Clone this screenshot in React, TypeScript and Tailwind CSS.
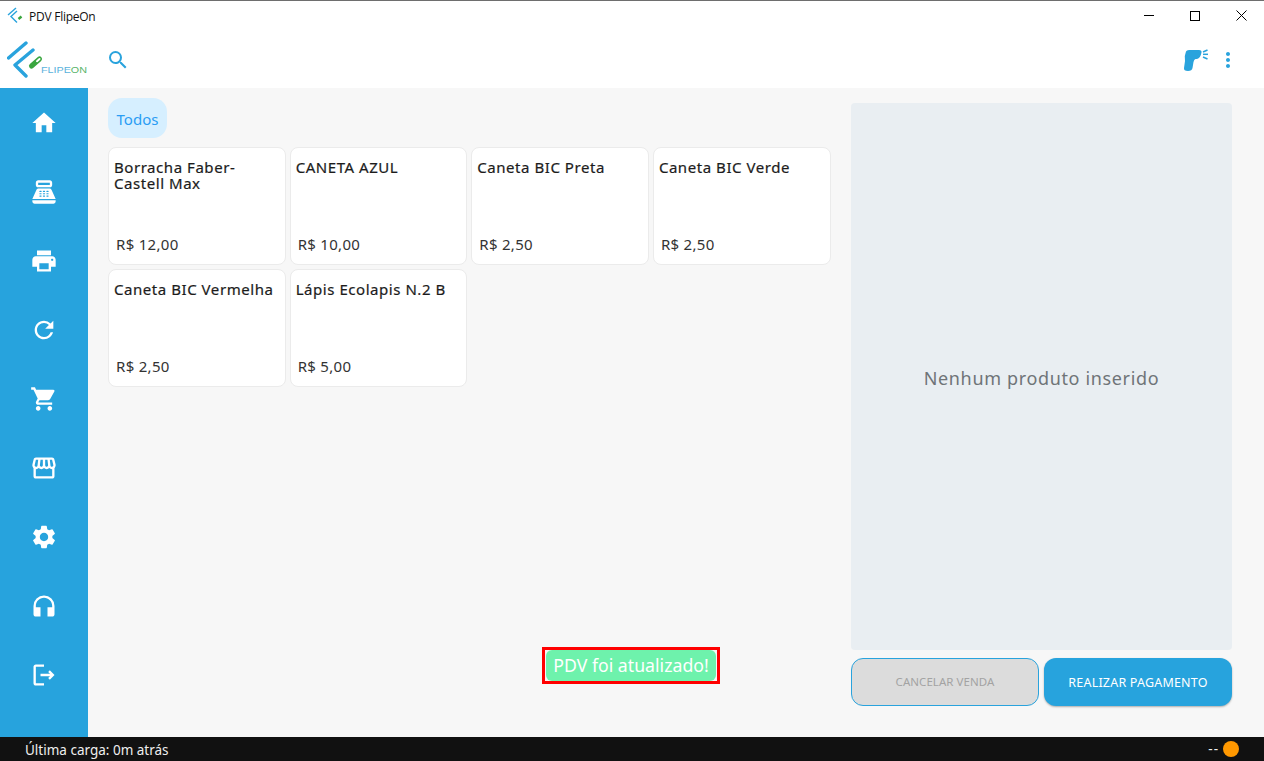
import React from "react";
import {
  MdHome,
  MdPointOfSale,
  MdPrint,
  MdRefresh,
  MdShoppingCart,
  MdOutlineStorefront,
  MdSettings,
  MdHeadphones,
  MdOutlineLogout,
  MdSearch,
  MdMoreVert,
} from "react-icons/md";

const navIcons = [
  MdHome,
  MdPointOfSale,
  MdPrint,
  MdRefresh,
  MdShoppingCart,
  MdOutlineStorefront,
  MdSettings,
  MdHeadphones,
  MdOutlineLogout,
];

const products = [
  { name: "Borracha Faber-Castell Max", price: "R$ 12,00" },
  { name: "CANETA AZUL", price: "R$ 10,00" },
  { name: "Caneta BIC Preta", price: "R$ 2,50" },
  { name: "Caneta BIC Verde", price: "R$ 2,50" },
  { name: "Caneta BIC Vermelha", price: "R$ 2,50" },
  { name: "Lápis Ecolapis N.2 B", price: "R$ 5,00" },
];

const SmallLogo = () => (
  <svg width="16" height="18" viewBox="0 0 16 18" fill="none">
    <path d="M1 8 L9 1" stroke="#29a3dd" strokeWidth="1.4" />
    <path d="M10 4 L4 9.5 L10 15.5" stroke="#29a3dd" strokeWidth="1.4" />
    <path d="M11.5 12 L14.5 9.5" stroke="#3aa63f" strokeWidth="2.4" />
  </svg>
);

const Logo = () => (
  <svg width="82" height="38" viewBox="0 0 82 38" fill="none">
    <path d="M1.5 18 L19 3" stroke="#29a3dd" strokeWidth="3.4" strokeLinecap="round" />
    <path
      d="M26 10 L8 25 L19 36"
      stroke="#29a3dd"
      strokeWidth="3.4"
      strokeLinecap="round"
      strokeLinejoin="round"
    />
    <path d="M24.5 26 L32.5 19" stroke="#3aa63f" strokeWidth="5" strokeLinecap="round" />
    <path d="M30 21.2 L32.5 19" stroke="#ffffff" strokeWidth="2" strokeLinecap="round" />
    <text
      x="34"
      y="32.5"
      fontFamily="'Liberation Sans', sans-serif"
      fontSize="8.5"
      textLength="46"
      lengthAdjust="spacingAndGlyphs"
    >
      <tspan fill="#5ab2dc">FLIPE</tspan>
      <tspan fill="#58b46a">ON</tspan>
    </text>
  </svg>
);

const ScannerIcon = () => (
  <svg width="25" height="23" viewBox="0 0 25 23" fill="none">
    <path
      d="M3 2.5 Q3.5 1 6 1 H16 Q19 1 18.5 3.5 Q17.5 9 14 10 H12.5 Q11 10.5 10.5 13 L9.5 19 Q9 22 5 22 Q0.5 22 1 19 L2 12 Q1 7 3 2.5 Z"
      fill="#29a3dd"
    />
    <path d="M20 5.3 H25" stroke="#29a3dd" strokeWidth="1.5" />
    <path d="M20 3 L24.5 1" stroke="#29a3dd" strokeWidth="1.5" />
    <path d="M20 8 L24.5 10" stroke="#29a3dd" strokeWidth="1.5" />
  </svg>
);

export default function App() {
  return (
    <div className="relative flex h-[761px] w-[1264px] flex-col overflow-hidden bg-[#f7f7f7] font-['Noto_Sans',sans-serif]">
      <div className="flex h-[30px] shrink-0 items-center border-t border-[#6e6e6e] bg-white pl-[7px]">
        <SmallLogo />
        <span className="ml-[6px] pt-[2px] font-['Open_Sans',sans-serif] text-xs tracking-[-0.25px] text-[#111]">
          PDV FlipeOn
        </span>
        <div className="ml-auto flex items-center">
          <div className="flex w-[46px] justify-center">
            <div className="h-px w-[10px] bg-black" />
          </div>
          <div className="flex w-[46px] justify-center">
            <div className="h-[10px] w-[10px] border border-black" />
          </div>
          <div className="flex w-[46px] justify-center">
            <svg width="11" height="11" viewBox="0 0 11 11">
              <path d="M0.5 0.5 L10.5 10.5 M10.5 0.5 L0.5 10.5" stroke="#000" strokeWidth="1" />
            </svg>
          </div>
        </div>
      </div>

      <div className="flex h-[58px] shrink-0 items-center bg-white">
        <div className="ml-[7px]">
          <Logo />
        </div>
        <MdSearch className="ml-[17px] mt-[2px] text-[#29a3dd]" size={24} />
        <div className="ml-auto mr-6 mt-[2px] flex items-center gap-2">
          <ScannerIcon />
          <MdMoreVert className="text-[#29a3dd]" size={24} />
        </div>
      </div>

      <div className="flex min-h-0 flex-1">
        <nav className="flex w-[88px] shrink-0 flex-col items-center bg-[#27a3dd] pt-[23px]">
          {navIcons.map((Icon, i) => (
            <div key={i} className="mb-[45px] flex h-6 items-center justify-center text-white">
              <Icon size={28} />
            </div>
          ))}
        </nav>

        <main className="flex min-w-0 flex-1">
          <section className="w-[743px] shrink-0 pl-5 pt-[10px]">
            <div className="flex h-10 w-[59px] items-center justify-center rounded-[14px] bg-[#d6efff] pt-[3px] text-[15px] text-[#2a9df4]">
              Todos
            </div>
            <div className="mt-[9px] grid w-[722.5px] grid-cols-4 gap-1">
              {products.map((p) => (
                <div
                  key={p.name}
                  className="relative h-[118px] rounded-lg border border-[#ebebeb] bg-white pl-[5px] pr-2 pt-[11px]"
                >
                  <div className="text-[15px] leading-4 tracking-[0.55px] text-[#1c1c1c] [-webkit-text-stroke:0.2px_#1c1c1c]">
                    {p.name}
                  </div>
                  <div className="absolute bottom-[9px] left-[7px] text-[15px] tracking-[0.3px] text-[#333]">
                    {p.price}
                  </div>
                </div>
              ))}
            </div>
          </section>

          <section className="ml-5 flex w-[381px] shrink-0 flex-col pb-[31px] pt-[15px]">
            <div className="flex flex-1 items-center justify-center rounded bg-[#e9eef2] pt-[3px] text-lg tracking-[0.65px] text-[#6f7478]">
              Nenhum produto inserido
            </div>
            <div className="mt-2 flex h-12 gap-[5px]">
              <button className="w-[188px] rounded-xl border border-[#29a3dd] bg-[#dcdcdc] text-[11.5px] tracking-[0.05px] text-[#a3a3a3]">
                CANCELAR VENDA
              </button>
              <button className="w-[188px] rounded-xl bg-[#27a3dd] pt-[3px] text-[12.5px] tracking-[0.2px] text-white shadow-[0_1px_2px_rgba(0,0,0,0.3)]">
                REALIZAR PAGAMENTO
              </button>
            </div>
          </section>
        </main>
      </div>

      <footer className="flex h-6 shrink-0 items-center bg-[#111111] pl-[25px] pr-[25px] text-[13.5px] text-[#eeeeee]">
        <span className="pt-[2px]">Última carga: 0m atrás</span>
        <span className="ml-auto mr-[4px] tracking-[1px]">--</span>
        <span className="h-4 w-4 rounded-full bg-[#ff9800]" />
      </footer>

      <div className="absolute left-[542px] top-[647px] flex h-[37px] w-[178px] items-center justify-center border-[3px] border-[#ff0000] bg-[#f7f7f7] px-px">
        <div className="flex h-[31px] w-full items-center justify-center rounded-md bg-[#6ef2ac] text-[17.7px] text-white">
          PDV foi atualizado!
        </div>
      </div>
    </div>
  );
}
